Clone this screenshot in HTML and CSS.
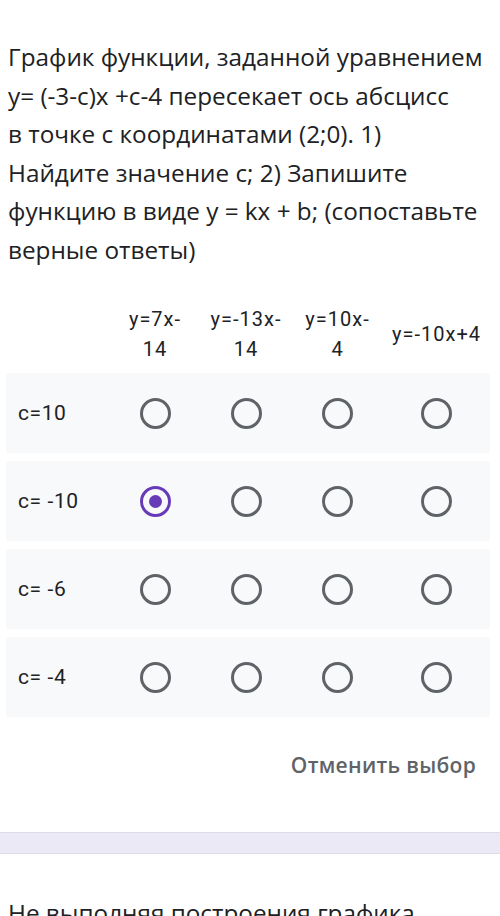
FILE: index.html
```html
<!DOCTYPE html>
<html lang="ru">
<head>
<meta charset="utf-8">
<link rel="stylesheet" href="styles.css">
</head>
<body>
<main class="page">
  <p class="question">График функции, заданной уравнением<br>y= (-3-c)x +c-4 пересекает ось абсцисс<br>в точке с координатами (2;0). 1)<br>Найдите значение c; 2) Запишите<br>функцию в виде y = kx + b; (сопоставьте<br>верные ответы)</p>

  <div class="grid">
    <div class="grid-head">
      <div class="cell"></div>
      <div class="cell col">y=7x-<br>14</div>
      <div class="cell col">y=-13x-<br>14</div>
      <div class="cell col">y=10x-<br>4</div>
      <div class="cell col">y=-10x+4</div>
    </div>
    <div class="grid-row">
      <div class="cell label">c=10</div>
      <div class="cell"><span class="radio"></span></div>
      <div class="cell"><span class="radio"></span></div>
      <div class="cell"><span class="radio"></span></div>
      <div class="cell"><span class="radio"></span></div>
    </div>
    <div class="grid-row">
      <div class="cell label">c= -10</div>
      <div class="cell"><span class="radio checked"></span></div>
      <div class="cell"><span class="radio"></span></div>
      <div class="cell"><span class="radio"></span></div>
      <div class="cell"><span class="radio"></span></div>
    </div>
    <div class="grid-row">
      <div class="cell label">c= -6</div>
      <div class="cell"><span class="radio"></span></div>
      <div class="cell"><span class="radio"></span></div>
      <div class="cell"><span class="radio"></span></div>
      <div class="cell"><span class="radio"></span></div>
    </div>
    <div class="grid-row">
      <div class="cell label">c= -4</div>
      <div class="cell"><span class="radio"></span></div>
      <div class="cell"><span class="radio"></span></div>
      <div class="cell"><span class="radio"></span></div>
      <div class="cell"><span class="radio"></span></div>
    </div>
  </div>

  <div class="actions"><span class="clear">Отменить выбор</span></div>

  <div class="divider"></div>

  <p class="question next">Не выполняя построения графика</p>
</main>
</body>
</html>
```

FILE: styles.css
```css
html, body {
  margin: 0;
  padding: 0;
  background: #ffffff;
}

.page {
  width: 500px;
  height: 916px;
  overflow: hidden;
}

.question {
  margin: 0;
  padding: 38px 8px 0 8px;
  font-family: "Open Sans", "Noto Sans", sans-serif;
  font-size: 24.3px;
  line-height: 38.5px;
  color: #202124;
  white-space: nowrap;
}

.grid {
  margin-top: 34px;
  padding: 0 10px 0 6px;
  display: flex;
  flex-direction: column;
  gap: 8px;
  font-family: Roboto, "Liberation Sans", sans-serif;
  color: #202124;
}

.grid-head,
.grid-row {
  display: grid;
  grid-template-columns: 104px 90px 92px 91px 107px;
  align-items: center;
}

.grid-head {
  height: 61px;
  margin-bottom: 1px;
}

.col {
  text-align: center;
  font-size: 20px;
  line-height: 30px;
  letter-spacing: 1px;
}

.grid-row {
  height: 80px;
  background: #f8f9fa;
  border-radius: 2px;
}

.cell {
  display: flex;
  justify-content: center;
  align-items: center;
}

.label {
  justify-content: flex-start;
  padding-left: 12px;
  font-size: 21px;
  letter-spacing: 0.6px;
}

.radio {
  box-sizing: border-box;
  width: 31px;
  height: 31px;
  border: 3px solid #5f6368;
  border-radius: 50%;
  display: flex;
  align-items: center;
  justify-content: center;
}

.radio.checked {
  border-color: #673ab7;
}

.radio.checked::after {
  content: "";
  width: 13px;
  height: 13px;
  border-radius: 50%;
  background: #673ab7;
}

.actions {
  display: flex;
  justify-content: flex-end;
  padding: 33px 24px 0 0;
  height: 30px;
  line-height: 30px;
}

.clear {
  font-family: "Open Sans", "Noto Sans", sans-serif;
  font-size: 21px;
  font-weight: 600;
  letter-spacing: 0.3px;
  color: #5f6368;
}

.divider {
  margin-top: 52px;
  height: 20px;
  background: #ece9f7;
  border-top: 1px solid #dedde6;
  border-bottom: 1px solid #dedde6;
}

.question.next {
  padding-top: 40px;
}
```
